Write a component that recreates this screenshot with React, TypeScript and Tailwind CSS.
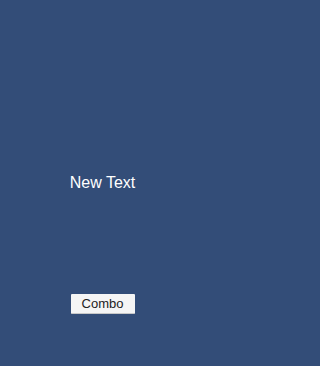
export default function App() {
  return (
    <div className="w-full min-h-[366px] bg-[#334d78] font-['Liberation_Sans',Arial,sans-serif]">
      <div className="w-[206px] h-[366px] flex flex-col items-center">
        <p className="mt-[174px] -ml-[1px] text-[16px] leading-[18px] text-white">New Text</p>
        <button className="mt-[102px] -ml-[1px] w-[64px] h-[20px] bg-[#f5f5f5] border-b border-[#c8c8c8] rounded-[1px] text-[13px] leading-[20px] text-[#222]">
          Combo
        </button>
      </div>
    </div>
  );
}
